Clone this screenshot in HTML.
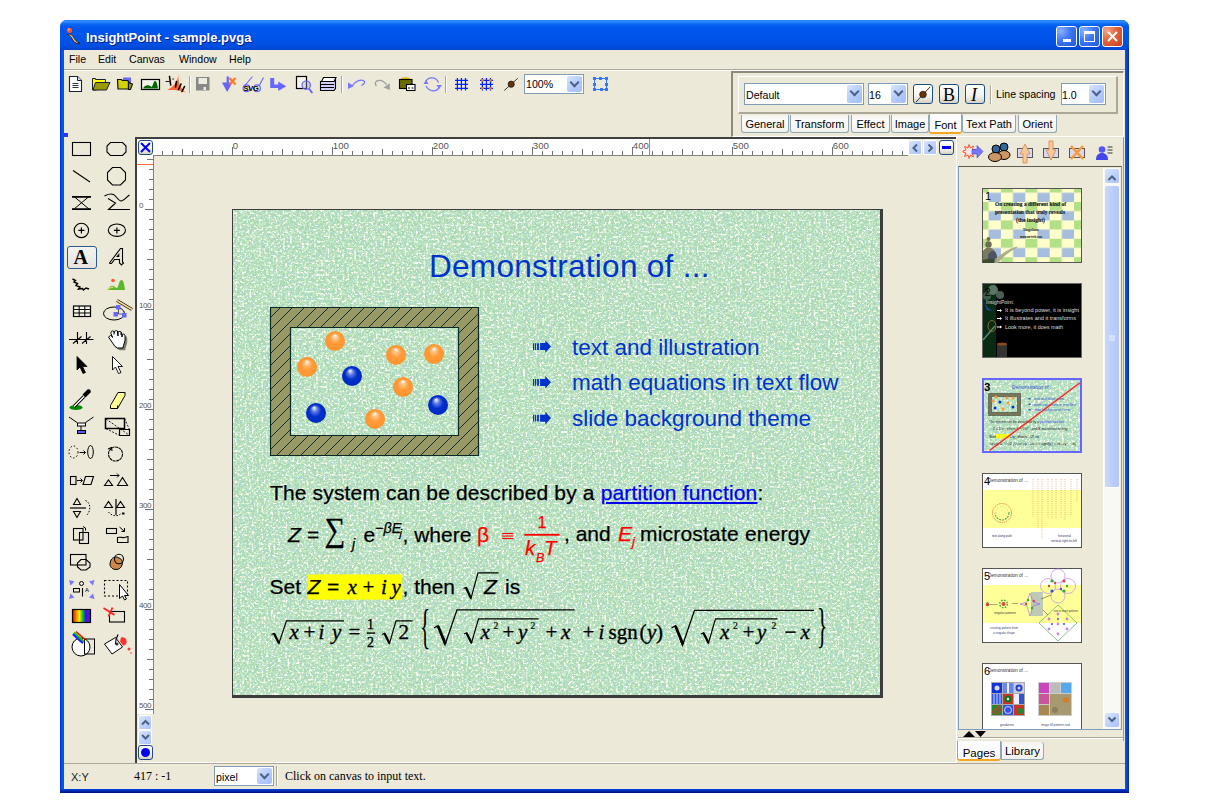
<!DOCTYPE html>
<html><head><meta charset="utf-8">
<style>
*{margin:0;padding:0;box-sizing:border-box}
html,body{width:1210px;height:806px;background:#fff;overflow:hidden;font-family:"Liberation Sans",sans-serif;font-size:11px;color:#000;position:relative}
.a{position:absolute;white-space:nowrap}
#win{left:60px;top:20px;width:1069px;height:773px;background:linear-gradient(90deg,#0019CF 0,#0050E8 1px,#0058EE 3px,#0055E5 4px);border-radius:7px 7px 0 0;overflow:hidden}
#title{left:0;top:0;width:1069px;height:30px;background:linear-gradient(#0A6AF8 0,#3D95FF 1px,#2A85FF 2px,#0A68F5 4px,#0058EE 7px,#0055EA 14px,#0052E6 22px,#004CDD 27px,#0042CC 30px)}
#wr{left:1065px;top:28px;width:4px;height:745px;background:linear-gradient(90deg,#0058EE 0,#0054E6 1px,#0048D6 2px,#0036BA 3px,#0026A0 4px)}
#wb{left:0;top:769px;width:1069px;height:4px;background:linear-gradient(#0846D9 0,#0038C8 1px,#0028B0 2px,#001A90 3px,#001580 4px)}
#client{left:64px;top:50px;width:1061px;height:739px;background:#ECE9D8}
.tb{position:absolute;width:21px;height:21px;top:26px;border:1px solid #fff;border-radius:3px;background:radial-gradient(circle at 20% 20%,#8DB2FF 0,#3D78F5 45%,#1F56DA 100%)}
.combo{position:absolute;background:#fff;border:1px solid #7F9DB9}
.cbtn{position:absolute;top:1px;right:1px;width:15px;bottom:1px;border-radius:2px;background:linear-gradient(135deg,#D7E4FE,#B1C8FB 60%,#A6BEF7)}
.cbtn:after{content:"";position:absolute;left:4px;top:3px;width:5px;height:5px;border-right:2px solid #4D6185;border-bottom:2px solid #4D6185;transform:rotate(45deg)}
.xbtn{position:absolute;border:1px solid #1C4D82;border-radius:3px;background:linear-gradient(#FFFFFF,#F3F2EC 60%,#D6D0C2)}
.tab{position:absolute;height:18px;top:115px;border:1px solid #91A7B4;border-top:none;border-radius:0 0 3px 3px;background:linear-gradient(#F4F3EE,#FCFCFE 40%,#F0EFE8);font-size:11px;text-align:center;line-height:19px}
.rl{position:absolute;font-size:9px;color:#555;font-family:"Liberation Sans",sans-serif;letter-spacing:-0.3px}
.st{position:absolute;font-family:"Liberation Sans",sans-serif}
.bl{color:#0033CC}
.sb{position:absolute;width:14px;height:15px;border-radius:2px;background:linear-gradient(135deg,#D9E5FE,#BBCFFB 60%,#ABC2F8);border:1px solid #fff}
</style></head><body>
<div id="win" class="a">
  <div id="title" class="a"></div>
  <div id="wr" class="a"></div><div id="wb" class="a"></div>
</div>
<div id="client" class="a"></div>

<!-- title text -->
<div class="a" style="left:86px;top:29.5px;font-size:13px;font-weight:bold;color:#fff;text-shadow:1px 1px 0 #0A1E8C">InsightPoint - sample.pvga</div>
<div class="tb" style="left:1056px"><div class="a" style="left:6px;top:12px;width:8px;height:3px;background:#fff"></div></div>
<div class="tb" style="left:1079px"><div class="a" style="left:4px;top:4px;width:11px;height:11px;border:1px solid #fff;border-top-width:3px"></div></div>
<div class="tb" style="left:1102px;background:radial-gradient(circle at 20% 20%,#F3A58A 0,#E2633B 45%,#C9401A 100%)"><svg class="a" style="left:4px;top:4px" width="11" height="11"><path d="M1 1L10 10M10 1L1 10" stroke="#fff" stroke-width="2"/></svg></div>

<!-- menu -->
<div class="a" style="left:69px;top:53px;font-size:10.6px">File</div>
<div class="a" style="left:98px;top:53px;font-size:10.6px">Edit</div>
<div class="a" style="left:129px;top:53px;font-size:10.6px">Canvas</div>
<div class="a" style="left:179px;top:53px;font-size:10.6px">Window</div>
<div class="a" style="left:229px;top:53px;font-size:10.6px">Help</div>
<div class="a" style="left:64px;top:69px;width:1061px;height:1px;background:#ACA899"></div>
<div class="a" style="left:64px;top:70px;width:1061px;height:1px;background:#fff"></div>

<!-- toolbar zoom combo -->
<div class="combo" style="left:524px;top:74px;width:60px;height:20px"><div class="a" style="left:1px;top:3px;font-size:10.6px">100%</div><div class="cbtn"></div></div>
<div class="a" style="left:585px;top:74px;width:1px;height:20px;background:#ECE9D8"></div>

<!-- toolbar icons -->
<svg class="a" style="left:0;top:0;overflow:visible" width="1210" height="806">
<!-- new doc -->
<path d="M69.5 76.5h8l4 4v11h-12z" fill="#fff" stroke="#1A2035" stroke-width="1.1"/>
<path d="M77.5 76.5v4h4" fill="#E8E8F0" stroke="#1A2035" stroke-width="1"/>
<path d="M72.5 83.5h6M72.5 85.5h6M72.5 87.5h6" stroke="#1A2035" stroke-width="0.9"/>
<!-- open folder -->
<path d="M92.5 78.5h3v1h10v3h-9v7.5h-4z" fill="#FFFF00" stroke="#1A2035" stroke-width="1"/>
<path d="M95.5 82.5h14.5l-3.5 7.5h-13.5z" fill="#999900" stroke="#1A2035" stroke-width="1"/>
<!-- folder 2 -->
<path d="M123 77.5h8v8h-8z" fill="#6A6AF0"/>
<path d="M117.5 79.5h4l1 1h5l1 1v7.5h-10.5z" fill="#D4D000" stroke="#111" stroke-width="1.2"/>
<path d="M128.5 82.5l4 1.5-2 5.5-2 0z" fill="#999900" stroke="#111" stroke-width="1.1"/>
<!-- image -->
<rect x="141.5" y="79.5" width="18" height="10" fill="#F4F2E6" stroke="#000" stroke-width="1.2"/>
<path d="M143 88.5c2-4 6-4 8.5-1.5c1.5-1 2-6 3.5-6c2 0 2.5 5 3 7.5z" fill="#006600"/>
<!-- xml -->
<path d="M178.4 74.7c0 6 0.5 10 2.5 12.5c1.5 2 3 3.5 4.6 5.3c-4-1.5-8-2.6-11.5-2.6c-2.5 0-5 0.2-6.6 0c3-2 6.5-4.5 8.5-7.5c1.5-2.5 2.2-5 2.5-7.7z" fill="#FF6633"/>
<g stroke="#000" stroke-linecap="round"><path d="M169.5 76.5l1.2 8.5" stroke-width="1.6"/><path d="M166 81.5h3" stroke-width="0.9"/><path d="M176.5 81.5l-1 5.5M181 84l-2.5 5.5M184.5 86.5l-2.5 5" stroke-width="1.6"/><path d="M173 79l0.2 0.2" stroke-width="1.2"/></g>
<path d="M189.5 76v17" stroke="#ACA899"/><path d="M190.5 76v17" stroke="#fff"/>
<!-- save grey -->
<path d="M196 77h13.5v13.5h-13.5z" fill="#888"/>
<rect x="198.5" y="78" width="8.5" height="6" fill="#EDEBE0"/>
<rect x="203.5" y="87" width="2.5" height="3" fill="#EDEBE0"/>
<!-- import -->
<path d="M226.6 76.5h2.3v6h3.6l-5.3 9.5-5.3-9.5h4.7z" fill="#6666FF"/>
<path d="M229.5 78l6 6.5M235.5 78l-6 6.5" stroke="#FF7722" stroke-width="2.2"/>
<!-- svg -->
<path d="M244.5 86l8-9.5M259 86l4.5-8.5" stroke="#6666FF" stroke-width="1.1" fill="none"/>
<circle cx="246.5" cy="88.3" r="3.4" fill="none" stroke="#6666FF" stroke-width="1.1"/>
<circle cx="257" cy="88.3" r="3.4" fill="none" stroke="#6666FF" stroke-width="1.1"/>
<text x="243.5" y="91" font-family="Liberation Sans" font-size="7.5" font-weight="bold" fill="#000" letter-spacing="-0.3">SVG</text>
<!-- arrow right -->
<path d="M270.2 78h4v6.6h4v-3l8 4.6-8 4.9v-3.2h-8z" fill="#6666FF"/>
<!-- preview -->
<rect x="296.5" y="76.5" width="10" height="12" fill="#F8F6E8" stroke="#000" stroke-width="1.2"/>
<circle cx="306.2" cy="85.2" r="4.2" fill="rgba(160,160,200,0.35)" stroke="#6666FF" stroke-width="1.2"/>
<path d="M308.8 88.5l3.5 4.5" stroke="#6666FF" stroke-width="2"/>
<!-- printer -->
<path d="M323.5 77.5h12.5l-2 4h-12.5z" fill="#fff" stroke="#000" stroke-width="1.1"/>
<path d="M320.5 81.5h13.5l1.5-1.5v8.5l-1.5 2h-13.5z" fill="#D0D0F8" stroke="#000" stroke-width="1.1"/>
<path d="M320.5 84.5h13.5M320.5 87.5h13.5" stroke="#000" stroke-width="1.1"/>
<path d="M341.5 76v17" stroke="#ACA899"/><path d="M342.5 76v17" stroke="#fff"/>
<!-- undo -->
<path d="M352 86c3-5 9-7 12-5c1.5 1 0.5 3-2.5 4.5" fill="none" stroke="#7777FF" stroke-width="1.3"/>
<path d="M348 82.5l6 3.5-6 3z" fill="#7777FF"/>
<!-- redo -->
<path d="M376.5 86c-2-2-1.5-5 2-5.5c3-0.5 6 1.5 8 4" fill="none" stroke="#A0A0A0" stroke-width="1.3"/>
<path d="M383.5 87.5l6.3-4.2v6.6z" fill="#A0A0A0"/>
<!-- bag -->
<path d="M401.5 79.5c0-2 8-2 8 0" fill="none" stroke="#E0B000" stroke-width="1.5"/>
<rect x="399.5" y="79.5" width="12.5" height="9" fill="#6B6B00" stroke="#000" stroke-width="1.1"/>
<rect x="406.5" y="84.5" width="8.5" height="6" fill="#fff" stroke="#000" stroke-width="1.1"/>
<path d="M408 88h2M411.5 88h2" stroke="#000"/>
<!-- refresh -->
<path d="M425.5 82c2-5 10-6 13 0.5" fill="none" stroke="#7777FF" stroke-width="1.3"/>
<path d="M436.5 85l5.5 0-3 4z" fill="#7777FF"/>
<path d="M439 88c-3 4-10 4-13-2" fill="none" stroke="#7777FF" stroke-width="1.3"/>
<path d="M423.5 84l2.5-4 2.5 4z" fill="#7777FF"/>
<path d="M445.5 76v17" stroke="#ACA899"/><path d="M446.5 76v17" stroke="#fff"/>
<!-- grid -->
<path d="M457.4 78v12.5M461.4 78v12.5M465.5 78v12.5M455 80.4h13M455 84.4h13M455 88.3h13" stroke="#0022FF" stroke-width="1.2"/>
<path d="M482.4 78v12.5M486.4 78v12.5M490.5 78v12.5M480 80.4h13M480 84.4h13M480 88.3h13" stroke="#0022FF" stroke-width="1.2"/>
<g fill="#E08000"><circle cx="482.4" cy="80.4" r="1.4"/><circle cx="490.5" cy="80.4" r="1.4"/><circle cx="482.4" cy="88.3" r="1.4"/><circle cx="490.5" cy="88.3" r="1.4"/></g>
<!-- pen -->
<path d="M504.2 90.5L517.8 78.3" stroke="#404040" stroke-width="1"/>
<circle cx="511.2" cy="84.2" r="3.1" fill="#6B3300" stroke="#222" stroke-width="0.8"/>
<!-- selection -->
<path d="M594.5 78.5h12v11h-12z" fill="none" stroke="#3377FF" stroke-width="1"/>
<g fill="#3377FF"><rect x="593" y="77" width="3" height="3"/><rect x="599" y="77" width="3" height="3"/><rect x="605" y="77" width="3" height="3"/><rect x="593" y="83" width="3" height="3"/><rect x="605" y="83" width="3" height="3"/><rect x="593" y="88" width="3" height="3"/><rect x="600" y="88" width="3" height="3"/><rect x="605" y="88" width="3" height="3"/></g>
</svg>

<!-- right property panel -->
<div class="a" style="left:731px;top:71px;width:393px;height:66px;border-left:2px solid #8E8B7E;border-top:2px solid #8E8B7E;border-right:1px solid #fff;border-bottom:1px solid #fff"></div>
<div class="a" style="left:738px;top:76px;width:380px;height:38px;border-left:1px solid #fff;border-top:1px solid #fff;border-right:2px solid #ACA899;border-bottom:2px solid #ACA899"></div>
<div class="combo" style="left:744px;top:83px;width:120px;height:22px"><div class="a" style="left:1px;top:5px;font-size:10.6px">Default</div><div class="cbtn"></div></div>
<div class="combo" style="left:868px;top:83px;width:40px;height:22px"><div class="a" style="left:0px;top:5px;font-size:10.6px">16</div><div class="cbtn"></div></div>
<div class="xbtn" style="left:913px;top:84px;width:20px;height:20px"></div>
<div class="xbtn" style="left:939px;top:84px;width:20px;height:20px"><div class="a" style="left:3px;top:0px;font:18px 'Liberation Serif'">B</div></div>
<div class="xbtn" style="left:965px;top:84px;width:20px;height:20px"><div class="a" style="left:5px;top:0px;font:italic 18px 'Liberation Serif'">I</div></div>
<div class="a" style="left:990px;top:85px;width:1px;height:19px;background:#ACA899"></div>
<div class="a" style="left:991px;top:85px;width:1px;height:19px;background:#fff"></div>
<div class="a" style="left:996px;top:88px;font-size:10.6px">Line spacing</div>
<div class="combo" style="left:1061px;top:83px;width:45px;height:22px"><div class="a" style="left:0px;top:5px;font-size:10.6px">1.0</div><div class="cbtn"></div></div>
<!-- tabs -->
<div class="tab" style="left:741px;width:48px">General</div>
<div class="tab" style="left:790px;width:59px">Transform</div>
<div class="tab" style="left:851px;width:39px">Effect</div>
<div class="tab" style="left:891px;width:38px">Image</div>
<div class="tab" style="left:929px;width:33px;top:114px;height:20px;background:#FCFCFE;line-height:23px;border-bottom:2px solid #F5A623">Font</div>
<div class="tab" style="left:962px;width:54px">Text Path</div>
<div class="tab" style="left:1018px;width:39px">Orient</div>

<!-- tool palette -->
<div class="a" style="left:64px;top:133px;width:4px;height:4px;background:#3333FF"></div>
<div class="xbtn" style="left:67px;top:246px;width:30px;height:23px;border-color:#2B5A8C;background:linear-gradient(#F4F4F0,#E6E4DC)"></div>
<svg class="a" style="left:0;top:0;overflow:visible" width="1210" height="806">
<g fill="none" stroke="#000" stroke-width="1.1">
<rect x="72.5" y="142.5" width="18" height="13"/>
<path d="M110.5 142.5h12l3.5 3.5v6l-3.5 3.5h-12l-3.5-3.5v-6z"/>
<path d="M73 170.5l17 11.5"/>
<path d="M112.5 167.5h8l5 5v7.5l-5 5h-8l-5-5v-7.5z"/>
<path d="M72.5 196.5h18M72.5 209.5h18M74 196.5l15.5 13M89 196.5l-15.5 13" stroke-width="1"/>
<path d="M72 196.8h19M72 209.2h19" stroke-width="1.8"/>
<path d="M104.5 196c3-1.5 5-3 9-1.5c3 1.5 5 7 8 6.5c3-0.5 5-4 8-6M108 198.5l7.5 4.5-7 6.5h21.5" stroke-width="1.1"/>
<circle cx="81.4" cy="230.4" r="7.2"/>
<path d="M78.4 230.4h6M81.4 227.4v6" stroke-width="1.2"/>
<ellipse cx="116.9" cy="230.2" rx="8.6" ry="6.2"/>
<path d="M113.9 230.4h6M116.9 227.4v6" stroke-width="1.2"/>
</g>
<text x="73.5" y="263.5" font-family="Liberation Serif" font-weight="bold" font-size="20" fill="#000">A</text>
<path d="M109.5 263l11-14.5h2v13.5l1 1-2 2-2-2v-3.5h-5l-3 4h-1.5z" fill="none" stroke="#000" stroke-width="1.1"/><path d="M116 257l3.3-3.8v3.8z" fill="#000"/>
<path d="M72.5 279l3 1.5-1.5 1.5 3.5 1.5-1.5 2 4 1.5-1.5 2 4-0.5 1 1.5 2.5-2 3 1" fill="none" stroke="#000" stroke-width="1.4"/>
<circle cx="113" cy="280.5" r="1.8" fill="#FF5533"/>
<path d="M107.5 290c2-4 4-5 6-4c1 0.5 2 2 4 2c1-3 2-8 4-8c2 0 3 5 3.5 10z" fill="#5CB82A"/>
<path d="M107.5 290c2-3 4-3 6-2.5" fill="none" stroke="#C8E050" stroke-width="1.5"/>
<g fill="none" stroke="#000" stroke-width="1.2">
<rect x="73.5" y="306" width="17" height="10.5" fill="#F6F6E8"/>
<path d="M73.5 309.5h17M73.5 313h17M79.2 306v10.5M84.8 306v10.5" stroke-width="1"/>
<ellipse cx="114" cy="313.5" rx="10.5" ry="6.5" stroke-width="1"/>
</g>
<path d="M117 300.5l15 9" stroke="#000" stroke-width="3.2"/><path d="M117 300.5l15 9" stroke="#F8D890" stroke-width="1.8"/>
<path d="M118.5 308.5v5.5h5" stroke="#333" stroke-width="0.8" fill="none"/>
<g fill="#6666FF"><rect x="116" y="305" width="4.5" height="4.5"/><rect x="113.5" y="312" width="4.5" height="4.5"/><rect x="122" y="313" width="4.5" height="4.5"/></g>
<g stroke="#000" stroke-width="1.1" fill="none">
<path d="M69 339.5h24.5M77.5 332v12M73 343.5l8.5-7M86.5 332v12M82 343.5l8.5-7"/>
</g>
<path d="M109.5 338l2-1.5 1.5 0.5 0.5 1.5-1.5-4c-0.5-2 1-3 2.5-2.5l1 1.5c0-1.5 1.5-2.3 3-1.5l0.5 5 0-4c1.5-1 3-0.5 3.5 0.5l0.5 4.5 0.5-2.5c1.5-1 2.5 0 2.5 1.5v4.5l-1.5 5-0.5 2.5h-5.5l-2.5-1.5z" fill="#222" opacity="0.55" transform="translate(1.2 1.2)"/>
<path d="M108.5 337l2-1.5 1.5 0.5 0.5 1.5-1.5-4c-0.5-2 1-3 2.5-2.5l1 1.5c0-1.5 1.5-2.3 3-1.5l0.5 5 0-4c1.5-1 3-0.5 3.5 0.5l0.5 4.5 0.5-2.5c1.5-1 2.5 0 2.5 1.5v4.5l-1.5 5-0.5 2.5h-5.5l-2.5-1.5z" fill="#fff" stroke="#000" stroke-width="1"/>
<path d="M114 331.5v3M117.5 331v3M121 332v3" stroke="#000" stroke-width="1"/>
<path d="M77 356.5v13.5l3-3 3 6.5 2.5-1-3-6h4.5z" fill="#000" stroke="#000" stroke-width="0.8"/>
<path d="M112.5 356.5v13.5l3-3 3 6.5 2.5-1-3-6h4.5z" fill="#fff" stroke="#000" stroke-width="0.9"/>
<!-- eyedropper -->
<ellipse cx="76" cy="407.5" rx="6.5" ry="2.5" fill="#008800"/>
<path d="M74 406.5l10-10" stroke="#000" stroke-width="3.2"/><path d="M74 406.5l10-10" stroke="#fff" stroke-width="1.4"/>
<path d="M82.5 394.5l5-5c2-1 4 1 3 3l-5 5z" fill="#000"/>
<!-- eraser -->
<path d="M110.5 405.5l7.5-13h7l-7.5 13z" fill="#FFFF99" stroke="#000" stroke-width="1"/>
<path d="M110.5 405.5v3h7l7.5-13v-3M117.5 405.5v3" fill="#FFFF99" stroke="#000" stroke-width="1"/>
<!-- Y connector -->
<path d="M69 417l8 5.5M93.5 417l-8 5.5M81 424v6" stroke="#000" stroke-width="1"/>
<rect x="77.5" y="423" width="8" height="3" fill="#fff" stroke="#000" stroke-width="1"/>
<rect x="77.5" y="430.5" width="8" height="3" fill="#5555FF" stroke="#000" stroke-width="1"/>
<!-- perspective box -->
<g fill="none" stroke="#000">
<path d="M105.5 418.5h19v10h-19z" stroke-width="1.5"/>
<path d="M119.5 429.5h10v6h-10z" stroke-width="1.2"/>
<path d="M106 419l23 16M124.5 418.5l5 11M106 428.5l13.5 7" stroke-width="0.9" stroke-dasharray="2 1.5"/>
</g>
<!-- dotted circle -> ellipse -->
<ellipse cx="73.5" cy="452" rx="4.5" ry="6" fill="none" stroke="#000" stroke-width="1" stroke-dasharray="1.5 2"/>
<path d="M79.5 452.5h6M83.5 450.5l2 2-2 2" stroke="#000" stroke-width="1" fill="none"/>
<ellipse cx="90.5" cy="452" rx="2.8" ry="6.5" fill="none" stroke="#000" stroke-width="1"/>
<circle cx="115.5" cy="454" r="7" fill="none" stroke="#000" stroke-width="1.1" stroke-dasharray="3 0.6"/>
<path d="M108 449l3.5-1.5 0.5 3.5" stroke="#000" stroke-width="1.1" fill="none"/>
<!-- rect -> parallelogram -->
<rect x="70.5" y="476.5" width="5.5" height="8" fill="none" stroke="#000" stroke-width="1.1"/>
<path d="M77 480.5h5M80.5 478.5l2 2-2 2" stroke="#000" stroke-width="1" fill="none"/>
<path d="M85.5 476.5h8l-2.5 8h-8z" fill="none" stroke="#000" stroke-width="1.1"/>
<path d="M104.5 485.5l4-5.5 4 5.5zM117.5 485.5l5-8 5 8z" fill="none" stroke="#000" stroke-width="1.1"/>
<path d="M110 475.5h9M117 473.5l2 2-2 2" stroke="#000" stroke-width="1" fill="none"/>
<!-- flip v -->
<path d="M73.5 504.5l3.5-6 3.5 6zM73.5 511.5l3.5 6 3.5-6z" fill="none" stroke="#000" stroke-width="1.1"/>
<path d="M70 508h16" stroke="#000" stroke-width="1.2"/>
<path d="M85.5 500.5c5 2 6 10 1 15" fill="none" stroke="#000" stroke-width="1" stroke-dasharray="1.5 1.5"/>
<path d="M104.5 507.5l4-6 4 6zM116.5 507.5l4-6 4 6z" fill="none" stroke="#000" stroke-width="1.1"/>
<path d="M116 499v16" stroke="#000" stroke-width="1.2"/>
<path d="M108.5 512c3 4 9 5 12 2" fill="none" stroke="#000" stroke-width="1" stroke-dasharray="1.5 1.5"/>
<rect x="122" y="512.5" width="2.5" height="2" fill="#000"/>
<!-- overlap rects -->
<rect x="73.5" y="528.5" width="9.5" height="11.5" fill="none" stroke="#000" stroke-width="1.1"/>
<rect x="79.5" y="532.5" width="9" height="11" fill="none" stroke="#000" stroke-width="1.1"/>
<path d="M83 526.5l2.5 1.5v2.5" fill="none" stroke="#000" stroke-width="1"/>
<rect x="106.5" y="528.5" width="10" height="5" fill="none" stroke="#000" stroke-width="1.1"/>
<path d="M119.5 527l5 4.5M124.5 528v3.5h-3" fill="none" stroke="#000" stroke-width="1"/>
<path d="M117.5 537.5c3-1 5 0.5 7 0c2-0.5 3-1 3.5-1v6h-10.5z" fill="none" stroke="#000" stroke-width="1.1"/>
<!-- rect + octagon -->
<rect x="70.5" y="554.5" width="15.5" height="10.5" fill="none" stroke="#000" stroke-width="1.1"/>
<path d="M81 559.5h5l4 3.5v4l-4 3h-5l-3.5-3v-4z" fill="none" stroke="#000" stroke-width="1.1"/>
<!-- orange blob -->
<path d="M111 560c2-3 5-4 8-2c3 1 4 4 3 7c-1 3-3 4.5-6 4.5c-3 0-6-2-6-5.5c0-1 0.5-3 1-4z" fill="#CC8844" stroke="#000" stroke-width="1"/>
<ellipse cx="119" cy="559" rx="4.5" ry="4.8" fill="none" stroke="#000" stroke-width="1.1"/>
<!-- align -->
<g fill="#7777FF"><path d="M69 580l5.5 1.5-4 4z"/><path d="M94.5 580l-5.5 1.5 4 4z"/><path d="M69 599l5.5-1.5-4-4z"/><path d="M94.5 599l-5.5-1.5 4-4z"/></g>
<rect x="73.5" y="588.5" width="6" height="3.5" fill="none" stroke="#000" stroke-width="1"/>
<circle cx="81.5" cy="583.5" r="2" fill="none" stroke="#000" stroke-width="1"/>
<path d="M82.5 588v8.5" stroke="#000" stroke-width="1.1"/>
<text x="85" y="591.5" font-family="Liberation Sans" font-size="6" fill="#000">A</text>
<!-- dotted select -->
<rect x="104.5" y="580.5" width="23" height="15.5" fill="none" stroke="#000" stroke-width="1.1" stroke-dasharray="2 2"/>
<path d="M119.5 584.5v14l3-2.5 2 4 2-1-2-3.5h4z" fill="#fff" stroke="#000" stroke-width="1"/>
<!-- rainbow -->
<defs><linearGradient id="rb" x1="0" x2="1"><stop offset="0" stop-color="#E00000"/><stop offset="0.2" stop-color="#FF8800"/><stop offset="0.38" stop-color="#FFEE00"/><stop offset="0.55" stop-color="#22CC00"/><stop offset="0.72" stop-color="#2222FF"/><stop offset="1" stop-color="#8800AA"/></linearGradient></defs>
<rect x="72.5" y="609.5" width="18" height="13" fill="url(#rb)" stroke="#000" stroke-width="1.2"/>
<!-- red x rect -->
<rect x="109.5" y="611.5" width="15" height="10.5" fill="none" stroke="#000" stroke-width="1.1"/>
<path d="M103.5 608l11 7M112.5 607.5l-4 9" stroke="#FF2222" stroke-width="1.8"/>
<!-- circle rgb -->
<circle cx="81" cy="647" r="9" fill="#fff" stroke="#000" stroke-width="1"/>
<rect x="84.5" y="639" width="10" height="15" fill="none" stroke="#000" stroke-width="1"/>
<path d="M73 634l10 9" stroke="#2222FF" stroke-width="2.5"/><path d="M74 632.5l10 9" stroke="#00CC00" stroke-width="2"/><path d="M76 631.5l9 8" stroke="#FF0000" stroke-width="1.5"/>
<!-- bucket -->
<path d="M104.5 644l11-6.5 7 9.5-10.5 7z" fill="#fff" stroke="#000" stroke-width="1"/>
<path d="M118 634.5l-2 5-0.5 5" stroke="#000" stroke-width="1.1" fill="none"/><circle cx="117" cy="644" r="1.5" fill="#333"/>
<path d="M121 637.5c4-1.5 6 2 5.5 5s-3 3-3.5 3l-3-4z" fill="#FF3333"/><circle cx="129" cy="649" r="1.5" fill="#FF3333"/><circle cx="131" cy="653" r="0.8" fill="#FF3333"/>
</svg>

<!-- canvas frame -->
<div class="a" style="left:135px;top:137px;width:822px;height:2px;background:#404040"></div>
<div class="a" style="left:135px;top:137px;width:2px;height:626px;background:#404040"></div>
<div class="a" style="left:137px;top:762px;width:820px;height:1px;background:#fff"></div>
<div class="a" style="left:956px;top:137px;width:1px;height:626px;background:#fff"></div>
<!-- h ruler -->
<div class="a" style="left:137px;top:139px;width:771px;height:17px;background:#fff"></div>
<div class="a" style="left:154px;top:155px;width:754px;height:1px;background:#808080"></div>
<!-- v ruler -->
<div class="a" style="left:137px;top:139px;width:17px;height:575px;background:#fff"></div>
<div class="a" style="left:153px;top:155px;width:1px;height:559px;background:#808080"></div>
<div class="a" style="left:137px;top:164px;width:16px;height:1px;background:#F0703A"></div>
<div class="xbtn" style="left:138px;top:140px;width:15px;height:15px"><svg class="a" style="left:1px;top:1px" width="11" height="11"><path d="M1 1L10 10M10 1L1 10" stroke="#0000FF" stroke-width="2"/></svg></div>
<div class="xbtn" style="left:939px;top:140px;width:15px;height:15px"><div class="a" style="left:2px;top:5px;width:9px;height:3px;background:#0000F0"></div></div>
<div class="xbtn" style="left:138px;top:745px;width:15px;height:15px"><div class="a" style="left:2px;top:2px;width:9px;height:9px;border-radius:50%;background:#0000F0"></div></div>
<div class="a" style="left:649px;top:139px;width:1px;height:16px;background:#F0703A"></div>
<div class="sb" style="left:908px;top:140px"></div><div class="sb" style="left:923px;top:140px"></div>
<div class="sb" style="left:138px;top:715px"></div><div class="sb" style="left:138px;top:730px"></div>
<svg class="a" style="left:0;top:0;overflow:visible" width="1210" height="806">
<path d="M917 144.5l-3.5 3.5 3.5 3.5M928.5 144.5l3.5 3.5-3.5 3.5M142 724.5l3.5-3.5 3.5 3.5M142 735l3.5 3.5 3.5-3.5" fill="none" stroke="#4D6185" stroke-width="2"/>
<!-- title icon -->
<circle cx="69.5" cy="30.3" r="2.6" fill="#FF5522"/><circle cx="68.8" cy="29.6" r="1" fill="#FFB090"/>
<path d="M67 34.5c3-1 5 0 6.5 2.5c1.5 3 3 5 6.5 6.3h-3.5c-2.5-1-3.5-3-5-5.5c-1-1.8-2.5-2.8-4.5-3.3z" fill="#D8C890" stroke="#2A1A08" stroke-width="0.8"/>
<!-- color pen button icon -->
<path d="M916 102L930 87" stroke="#333" stroke-width="1"/>
<circle cx="923" cy="94.5" r="3.3" fill="#6B3300" stroke="#222" stroke-width="0.8"/>
</svg>
<div id="rulers"></div>
<svg class="a" style="left:0;top:0;overflow:visible" width="1210" height="806"><g stroke="#707070" stroke-width="1">
<path d="M162.5 151V155M172.5 151V155M182.5 149V155M192.5 151V155M202.5 151V155M212.5 151V155M222.5 151V155M232.5 147V155M242.5 151V155M252.5 151V155M262.5 151V155M272.5 151V155M282.5 149V155M292.5 151V155M302.5 151V155M312.5 151V155M322.5 151V155M332.5 147V155M342.5 151V155M352.5 151V155M362.5 151V155M372.5 151V155M382.5 149V155M392.5 151V155M402.5 151V155M412.5 151V155M422.5 151V155M432.5 147V155M442.5 151V155M452.5 151V155M462.5 151V155M472.5 151V155M482.5 149V155M492.5 151V155M502.5 151V155M512.5 151V155M522.5 151V155M532.5 147V155M542.5 151V155M552.5 151V155M562.5 151V155M572.5 151V155M582.5 149V155M592.5 151V155M602.5 151V155M612.5 151V155M622.5 151V155M632.5 147V155M642.5 151V155M652.5 151V155M662.5 151V155M672.5 151V155M682.5 149V155M692.5 151V155M702.5 151V155M712.5 151V155M722.5 151V155M732.5 147V155M742.5 151V155M752.5 151V155M762.5 151V155M772.5 151V155M782.5 149V155M792.5 151V155M802.5 151V155M812.5 151V155M822.5 151V155M832.5 147V155M842.5 151V155M852.5 151V155M862.5 151V155M872.5 151V155M882.5 149V155M892.5 151V155M902.5 151V155"/>
<path d="M147 159.5H153M149 169.5H153M149 179.5H153M149 189.5H153M149 199.5H153M145 209.5H153M149 219.5H153M149 229.5H153M149 239.5H153M149 249.5H153M147 259.5H153M149 269.5H153M149 279.5H153M149 289.5H153M149 299.5H153M145 309.5H153M149 319.5H153M149 329.5H153M149 339.5H153M149 349.5H153M147 359.5H153M149 369.5H153M149 379.5H153M149 389.5H153M149 399.5H153M145 409.5H153M149 419.5H153M149 429.5H153M149 439.5H153M149 449.5H153M147 459.5H153M149 469.5H153M149 479.5H153M149 489.5H153M149 499.5H153M145 509.5H153M149 519.5H153M149 529.5H153M149 539.5H153M149 549.5H153M147 559.5H153M149 569.5H153M149 579.5H153M149 589.5H153M149 599.5H153M145 609.5H153M149 619.5H153M149 629.5H153M149 639.5H153M149 649.5H153M147 659.5H153M149 669.5H153M149 679.5H153M149 689.5H153M149 699.5H153M145 709.5H153"/>
</g><g font-family="Liberation Sans" font-size="9.6" fill="#555">
<text x="232.8" y="149">0</text>
<text x="332.8" y="149">100</text>
<text x="432.8" y="149">200</text>
<text x="532.8" y="149">300</text>
<text x="632.8" y="149">400</text>
<text x="732.8" y="149">500</text>
<text x="832.8" y="149">600</text>
</g><g font-family="Liberation Sans" font-size="8" fill="#555" letter-spacing="-0.4">
<text x="139" y="207.7">0</text>
<text x="139" y="307.7">100</text>
<text x="139" y="407.7">200</text>
<text x="139" y="507.7">300</text>
<text x="139" y="607.7">400</text>
<text x="139" y="707.7">500</text>
</g></svg>

<!-- slide -->
<div class="a" style="left:232px;top:209px;width:651px;height:489px;background:#3C3C3C"></div>
<svg class="a" style="left:233px;top:210px" width="647" height="485">
<defs>
<filter id="nz" x="0" y="0" width="100%" height="100%">
<feTurbulence type="fractalNoise" baseFrequency="0.42" numOctaves="3" seed="11" result="t"/>
<feColorMatrix in="t" type="matrix" values="0 0 0 0 0.44  0 0 0 0 0.72  0 0 0 0 0.66  0 6 0 0 -2.9" result="d"/>
<feColorMatrix in="t" type="matrix" values="0 0 0 0 0.58  0 0 0 0 0.83  0 0 0 0 0.52  0 0 6 0 -2.9" result="g"/>
<feColorMatrix in="t" type="matrix" values="0 0 0 0 0.96  0 0 0 0 0.97  0 0 0 0 0.90  6 0 0 0 -3.3" result="w"/>
<feMerge><feMergeNode in="d"/><feMergeNode in="g"/><feMergeNode in="w"/></feMerge>
</filter>
</defs>
<rect width="647" height="485" fill="#ABD7B4"/>
<rect width="647" height="485" filter="url(#nz)"/>
</svg>

<!-- slide content -->
<svg class="a" style="left:0;top:0;overflow:visible" width="1210" height="806">
<defs>
<pattern id="hatch" patternUnits="userSpaceOnUse" width="12" height="12" x="0" y="0">
<rect width="12" height="12" fill="#999966"/>
<path d="M-3 3L3 -3M0 12L12 0M9 15L15 9" stroke="#0F2E2E" stroke-width="1"/>
</pattern>
<radialGradient id="og" cx="0.5" cy="0.5" r="0.5" fx="0.5" fy="0.22">
<stop offset="0" stop-color="#FFFFFF"/><stop offset="0.25" stop-color="#FFC080"/><stop offset="0.55" stop-color="#FF9A38"/><stop offset="1" stop-color="#FF952E"/>
</radialGradient>
<radialGradient id="bg2" cx="0.5" cy="0.5" r="0.5" fx="0.4" fy="0.22">
<stop offset="0" stop-color="#FFFFFF"/><stop offset="0.3" stop-color="#5A78E0"/><stop offset="0.6" stop-color="#0030CC"/><stop offset="1" stop-color="#0028C0"/>
</radialGradient>
</defs>
<path d="M270.5 307.5H478.5V455.5H270.5ZM290.5 327.5V435.5H458.5V327.5Z" fill="url(#hatch)" fill-rule="evenodd" stroke="#0A2A2A" stroke-width="1.2"/>
<circle cx="335" cy="341" r="10" fill="url(#og)"/>
<circle cx="307" cy="367" r="10" fill="url(#og)"/>
<circle cx="396" cy="355" r="10" fill="url(#og)"/>
<circle cx="434" cy="354" r="10" fill="url(#og)"/>
<circle cx="403" cy="387" r="10" fill="url(#og)"/>
<circle cx="375" cy="419" r="10" fill="url(#og)"/>
<circle cx="352" cy="376" r="10" fill="url(#bg2)"/>
<circle cx="316" cy="413" r="10" fill="url(#bg2)"/>
<circle cx="438" cy="405" r="10" fill="url(#bg2)"/>
<g fill="#0033CC">
<path id="arr" d="M533 343.2h1.2v6.8h-1.2zM535 343.2h1.2v6.8h-1.2zM537.1 343.2h1.8v6.8h-1.8zM540.1 343.1h5.2v-2.9l5.7 6.3l-5.7 6.3v-2.7h-5.2z"/>
<use href="#arr" y="35.8"/><use href="#arr" y="71.6"/>
</g>
</svg>
<div class="a" style="left:429px;top:248px;font-size:31.5px;color:#0033CC;letter-spacing:0.3px">Demonstration of ...</div>
<div class="a" style="left:572px;top:334.5px;font-size:22.5px;color:#0033CC">text and illustration</div>
<div class="a" style="left:572px;top:370px;font-size:22.5px;color:#0033CC">math equations in text flow</div>
<div class="a" style="left:572px;top:406px;font-size:22.5px;color:#0033CC">slide background theme</div>
<div class="a" style="left:270px;top:481px;font-size:21px;letter-spacing:0.15px;-webkit-text-stroke:0.25px #000">The system can be described by a <span style="color:#0000EE;text-decoration:underline;-webkit-text-stroke:0.25px #0000EE">partition function</span>:</div>

<!-- math -->
<svg class="a" style="left:0;top:0;overflow:visible" width="1210" height="806">
<rect x="307.8" y="574.4" width="94.4" height="25.2" fill="#FFFF00"/>
<g font-family="Liberation Sans" font-size="21" fill="#000" stroke="#000" stroke-width="0.25">
<text x="288" y="542" font-style="italic">Z</text>
<text x="307" y="542">=</text>
<text transform="translate(324.7 540.8) scale(0.97 1.12)" x="0" y="0" font-family="Liberation Serif" font-size="30">&#8721;</text>
<text x="352" y="549" font-style="italic" font-size="14">j</text>
<text x="363.5" y="542">e</text>
<text x="375" y="533" font-style="italic" font-size="14.5">&#8722;&#946;E</text>
<text x="399.5" y="537" font-style="italic" font-size="11">j</text>
<text x="402.5" y="542">, where</text>
<g fill="#FF0000" stroke="#FF0000">
<text x="477" y="542">&#946;</text>
<g stroke-width="0"><rect x="502.2" y="533" width="11.1" height="1.1"/><rect x="502.2" y="535.5" width="11.1" height="1.1"/><rect x="502.2" y="538" width="11.1" height="1.1"/></g>
<text x="537.5" y="528" font-size="16">1</text>
<rect x="524.5" y="534" width="35" height="1.6"/>
<text x="525" y="555.4" font-style="italic" font-size="20.5">k</text>
<text x="536" y="562" font-style="italic" font-size="12.5">B</text>
<text x="544" y="555.4" font-style="italic" font-size="20.5">T</text>
<text x="618" y="541" font-style="italic">E</text>
<text x="632" y="546" font-style="italic" font-size="13">j</text>
</g>
<text x="564" y="541">, and</text>
<text x="640" y="541" letter-spacing="0.2">microstate energy</text>
<text x="269.5" y="593.5">Set</text>
<text x="307.5" y="593.5" font-style="italic">Z</text>
<text x="327" y="593.5">=</text>
<text x="402.5" y="593.5">, then</text>
<text x="484" y="593.5" font-style="italic">Z</text>
<text x="505" y="593.5">is</text>
</g>
<g font-family="Liberation Serif" font-size="21" fill="#000" stroke="#000" stroke-width="0.35">
<text x="347.5" y="593.5" font-style="italic">x</text>
<text x="362.5" y="593.5">+</text>
<text x="381" y="593.5" font-style="italic">i</text>
<text x="391.5" y="593.5" font-style="italic">y</text>
<!-- line 4 -->
<text x="289.5" y="639" font-style="italic">x</text>
<text x="303.5" y="639">+</text>
<text x="318.5" y="639" font-style="italic">i</text>
<text x="332" y="639" font-style="italic">y</text>
<text x="348.5" y="639">=</text>
<text x="367" y="629" font-size="14">1</text>
<rect x="367" y="632.6" width="8" height="1.1"/>
<text x="367" y="647" font-size="14">2</text>
<text x="398.5" y="639">2</text>
<text x="420" y="642.6" font-size="47.6" stroke-width="0" transform="translate(420 0) scale(0.45 1) translate(-420 0)">{</text>
<text x="480.5" y="639" font-style="italic">x</text>
<text x="493.5" y="629" font-size="9.5" stroke-width="0.2">2</text>
<text x="502.5" y="639">+</text>
<text x="518" y="639" font-style="italic">y</text>
<text x="530.5" y="629" font-size="9.5" stroke-width="0.2">2</text>
<text x="545.5" y="639">+</text>
<text x="561" y="639" font-style="italic">x</text>
<text x="582.5" y="639">+</text>
<text x="598.5" y="639" font-style="italic">i</text>
<text x="608.5" y="639">sgn</text>
<text x="639.5" y="639">(</text>
<text x="647" y="639" font-style="italic">y</text>
<text x="656" y="639">)</text>
<text x="720" y="639" font-style="italic">x</text>
<text x="733" y="629" font-size="9.5" stroke-width="0.2">2</text>
<text x="742.5" y="639">+</text>
<text x="757" y="639" font-style="italic">y</text>
<text x="771.5" y="629" font-size="9.5" stroke-width="0.2">2</text>
<text x="784.5" y="639">&#8722;</text>
<text x="800.5" y="639" font-style="italic">x</text>
<text x="817" y="642" font-size="47.6" stroke-width="0" transform="translate(817 0) scale(0.45 1) translate(-817 0)">}</text>
</g>
<g fill="none" stroke="#000" stroke-linejoin="miter">
<!-- sqrt Z line3 -->
<path d="M463.5 588.5l2.5-1.2 5 11 7-25.5h20.5" stroke-width="1.2"/>
<!-- line4 sqrt(x+iy) -->
<path d="M271.5 634.5l2.5-1.2 5 10 7.5-22.5h57.5" stroke-width="1.2"/>
<!-- sqrt2 -->
<path d="M382 634.5l2.5-1.2 5 10 6.5-22.5h16.5" stroke-width="1.2"/>
<!-- big sqrt 1 -->
<path d="M434 628l4-2.2 7 19 12-35h117.5" stroke-width="1.3"/>
<path d="M438 626l7.5 18" stroke-width="2.8"/>
<path d="M464 634l2.5-1.2 5 10 7-24h60" stroke-width="1.2"/>
<!-- big sqrt 2 -->
<path d="M671.5 628l4-2.2 7 19.5 12-35h119.5" stroke-width="1.3"/>
<path d="M675.5 626l7.5 18.5" stroke-width="2.8"/>
<path d="M701 634l2.5-1.2 5 10 7-24h62" stroke-width="1.2"/>
</g>
<g stroke="#000" stroke-width="2.2">
<path d="M274 633.5l5 10"/><path d="M384.5 633.5l5 10"/><path d="M466.5 633l5 10"/><path d="M703.5 633l5 10"/><path d="M466 587.5l5 11"/>
</g>
</svg>

<!-- right slide panel -->
<div class="a" style="left:1123px;top:137px;width:1px;height:604px;background:#9D9A8C"></div>
<div class="a" style="left:958px;top:166px;width:164px;height:564px;border:1px solid #7F9DB9;border-top:1px solid #5E5C50"></div>
<div class="a" style="left:1103px;top:168px;width:17px;height:561px;background:#F8F8F4;border-left:1px solid #fff"></div>
<div class="a" style="left:1105px;top:169px;width:14px;height:14px;border-radius:2px;background:linear-gradient(135deg,#D9E5FE,#BBCFFB 60%,#ABC2F8)"></div>
<div class="a" style="left:1105px;top:186px;width:14px;height:302px;border-radius:2px;background:linear-gradient(90deg,#C9D8FC,#BCCEFA 50%,#B4C8F8);border:1px solid #fff;border-width:0 0 1px 0"></div>
<div class="a" style="left:1105px;top:713px;width:14px;height:14px;border-radius:2px;background:linear-gradient(135deg,#D9E5FE,#BBCFFB 60%,#ABC2F8)"></div>
<svg class="a" style="left:0;top:0;overflow:visible" width="1210" height="806">
<path d="M1108.5 180l3.5-3.5 3.5 3.5M1108.5 717.5l3.5 3.5 3.5-3.5" fill="none" stroke="#4D6185" stroke-width="2"/>
<path d="M1109 336h6M1109 338h6M1109 340h6" stroke="#EEF3FE" stroke-width="1"/>
<!-- splitter arrows -->
<path d="M963 737l6-6 6 6zM975 731h11l-5.5 6z" fill="#000"/>
<path d="M958 737.5h165" stroke="#ACA899"/><path d="M958 738.5h165" stroke="#fff"/>
<!-- panel icons -->
<path d="M963 151l3-1-1.5-3.5 3.5 1.5 1-3.5 1.5 3.5 3-2-1 3.5h3v4h-3l1 3.5-3-2-1.5 3.5-1-3.5-3.5 1.5 1.5-3.5-3-1z" fill="#FFE6E6" stroke="#FF5533" stroke-width="1"/>
<path d="M972 149.5h5v-4l6 6-6 6.5v-4h-5z" fill="#7777FF" stroke="#3333CC" stroke-width="0.5"/>
<ellipse cx="996" cy="149" rx="4" ry="4" fill="#336699" stroke="#000" stroke-width="1"/>
<ellipse cx="1004" cy="147" rx="4" ry="4" fill="#336699" stroke="#000" stroke-width="1"/>
<ellipse cx="1004" cy="155" rx="6" ry="4.5" fill="#CC9966" stroke="#000" stroke-width="1"/>
<ellipse cx="995" cy="157" rx="6.5" ry="4.5" fill="#CC9966" stroke="#000" stroke-width="1"/>
<rect x="1017.5" y="148.5" width="15" height="9" fill="#D8D8F0" stroke="#555" stroke-width="1"/>
<path d="M1023 163v-9h-3l5-10 5 10h-3v9z" fill="#F8C89A" stroke="#D08850" stroke-width="0.8"/>
<rect x="1043.5" y="148.5" width="15" height="9" fill="#D8D8F0" stroke="#555" stroke-width="1"/>
<path d="M1049 141v9h-3l5 10 5-10h-3v-9z" fill="#F8C89A" stroke="#D08850" stroke-width="0.8"/>
<rect x="1069.5" y="148.5" width="15" height="9" fill="#D8D8F0" stroke="#555" stroke-width="1"/>
<path d="M1071 146l12 13M1083 146l-12 13" stroke="#FF9933" stroke-width="2.5"/>
<circle cx="1102" cy="149.5" r="3.3" fill="#5555FF"/>
<path d="M1096 160c0-5 2.5-7 6-7s6 2 6 7z" fill="#4444EE"/>
<path d="M1107.5 147h5M1107.5 150h5M1107.5 153h5" stroke="#333" stroke-width="1"/>
</svg>
<div class="tab" style="left:957px;top:741px;width:44px;height:20px;background:#FCFCFE;border-bottom:2px solid #F5A623;line-height:24px;font-size:11.5px">Pages</div>
<div class="tab" style="left:1001px;top:742px;width:43px;height:18px;border-bottom:1px solid #91A7B4;border-radius:0 3px 3px 0;font-size:11.5px;line-height:19px">Library</div>
<div id="thumbs"></div>
<svg class="a" style="left:0;top:0;overflow:visible" width="1210" height="806">
<defs>
<pattern id="ging" patternUnits="userSpaceOnUse" width="24.4" height="18.4" patternTransform="translate(976.5 183.6)">
<rect width="12.2" height="9.2" fill="#B3DF86"/><rect x="12.2" width="12.2" height="9.2" fill="#FFFFCC"/>
<rect y="9.2" width="12.2" height="9.2" fill="#FFFFCC"/><rect x="12.2" y="9.2" width="12.2" height="9.2" fill="#A6BEDE"/>
</pattern>
<pattern id="tn3" patternUnits="userSpaceOnUse" width="4" height="4"><rect width="4" height="4" fill="#BFE0C2"/><rect x="1" y="1" width="1" height="1" fill="#E8F4E6"/><rect x="3" y="2" width="1" height="1" fill="#9CCDB0"/></pattern>
<clipPath id="lc"><rect x="959" y="167" width="144" height="562"/></clipPath>
</defs>
<g clip-path="url(#lc)">
<!-- thumb 1 -->
<rect x="982.5" y="188.5" width="99" height="74" fill="url(#ging)" stroke="#555" stroke-width="1"/>
<g font-family="Liberation Serif" font-weight="bold" fill="#1A1A1A" font-size="6.5" stroke="#1A1A1A" stroke-width="0.15">
<text x="995" y="206" textLength="71" lengthAdjust="spacingAndGlyphs">On creating a different kind of</text>
<text x="995" y="214" textLength="70" lengthAdjust="spacingAndGlyphs">presentation that truly reveals</text>
<text x="1016" y="222" textLength="29" lengthAdjust="spacingAndGlyphs">(the insight)</text>
<text x="1023" y="231" font-size="3.5" font-weight="normal" fill="#555">Tangolinus</text>
<text x="1020" y="237.5" font-size="3" font-weight="normal" fill="#666">www.nx-tech.com</text>
</g>
<circle cx="988.5" cy="239" r="2" fill="#6E6E52"/>
<circle cx="988.5" cy="244.5" r="3.2" fill="#6E6E52"/>
<path d="M983 263v-12c1.5-2 3-3.5 5.5-3.5s5 1.5 6.5 4c1 2 1.5 5 1.5 11.5z" fill="#7A7A5C"/>
<path d="M988 263v-8c1-3 3-4 5-4s3.5 2 4 5v7z" fill="#4C5566"/>
<path d="M995 259c4-3 9-7 14-9.5c3-1.5 6-2.5 8.5-3c0.5 0.5-0.5 1.5-2 2c-4 2-9 5.5-13 9.5c-1.5 1.5-3 3-4 5h-4z" fill="#A5A585" opacity="0.9"/>
<path d="M983 263v-3c3-1 7-1.5 11-1v4z" fill="#3E4A30"/>
<text x="985" y="200" font-family="Liberation Sans" font-size="11" fill="#000">1</text>
<!-- thumb 2 -->
<rect x="982.5" y="283.5" width="99" height="74" fill="#000" stroke="#666" stroke-width="1"/>
<rect x="983" y="284" width="13" height="73" fill="#0A2A14"/>
<circle cx="993" cy="290" r="5" fill="#6E8A78" opacity="0.8"/><circle cx="1000" cy="295" r="4" fill="#5A6E62" opacity="0.85"/><circle cx="987" cy="296" r="4" fill="#3E5A48"/>
<path d="M984 302l4 6 5 3-6-1z" fill="#1A4A9A"/>
<path d="M983 340l12-14" stroke="#5A8A6A" stroke-width="1.5"/>
<ellipse cx="992" cy="326" rx="4" ry="5.5" fill="none" stroke="#8A6A2A" stroke-width="1"/>
<rect x="997" y="344" width="10" height="13" fill="#333"/><ellipse cx="1002" cy="344" rx="5" ry="1.5" fill="#8A4A10"/>
<g font-family="Liberation Sans" fill="#DDD" font-size="5">
<text x="986" y="304" textLength="28" lengthAdjust="spacingAndGlyphs">InsightPoint:</text>
<text x="1005" y="312" textLength="74" lengthAdjust="spacingAndGlyphs">It is beyond power, it is insight</text>
<text x="1005" y="320" textLength="71" lengthAdjust="spacingAndGlyphs">It illustrates and it transforms</text>
<text x="1005" y="328.5" textLength="58" lengthAdjust="spacingAndGlyphs">Look more, it does math</text>
</g>
<g fill="#fff"><path d="M997 310h3v-1l2 1.5-2 1.5v-1h-3z"/><path d="M997 318h3v-1l2 1.5-2 1.5v-1h-3z"/><path d="M997 326.5h3v-1l2 1.5-2 1.5v-1h-3z"/></g>
<text x="984.5" y="296" font-family="Liberation Sans" font-size="11" fill="#000">2</text>
<!-- thumb 3 -->
<rect x="983" y="379" width="98" height="73" fill="#ABD7B4"/><rect x="983" y="379" width="98" height="73" filter="url(#nz)"/><rect x="983" y="379" width="98" height="73" fill="none" stroke="#6666FF" stroke-width="2"/>
<text x="1012" y="389" font-family="Liberation Sans" font-size="5.2" fill="#3355CC" textLength="42" lengthAdjust="spacingAndGlyphs">Demonstration of ...</text>
<path d="M988.5 393.5h32v22h-32zM991.5 396.5v16h26v-16z" fill="#777755" fill-rule="evenodd" stroke="#333" stroke-width="0.5"/>
<g fill="#FF9933"><circle cx="996" cy="397" r="1.5"/><circle cx="993" cy="401" r="1.5"/><circle cx="1007" cy="398" r="1.5"/><circle cx="1013" cy="398" r="1.5"/><circle cx="1008" cy="403" r="1.5"/><circle cx="1003" cy="409" r="1.5"/></g>
<g fill="#0033CC"><circle cx="1000" cy="402" r="1.5"/><circle cx="995" cy="408" r="1.5"/><circle cx="1013" cy="407" r="1.5"/></g>
<g fill="#3355CC" font-family="Liberation Sans" font-size="3.5"><text x="1034" y="400" textLength="30" lengthAdjust="spacingAndGlyphs">text and illustration</text><text x="1034" y="405.5" textLength="42" lengthAdjust="spacingAndGlyphs">math equations in text flow</text><text x="1034" y="411" textLength="37" lengthAdjust="spacingAndGlyphs">slide background theme</text></g>
<g fill="#3355CC"><rect x="1028.5" y="398" width="2" height="1.5"/><rect x="1028.5" y="403.5" width="2" height="1.5"/><rect x="1028.5" y="409" width="2" height="1.5"/></g>
<g font-family="Liberation Sans" font-size="3.3" fill="#222">
<text x="989" y="423" textLength="50" lengthAdjust="spacingAndGlyphs">The system can be described by a</text>
<text x="1040" y="423" fill="#3333EE" textLength="24" lengthAdjust="spacingAndGlyphs">partition function</text>
<text x="993" y="430" textLength="75" lengthAdjust="spacingAndGlyphs">Z = Σ e , where β ≡ 1/kT , and E microstate energy</text>
<text x="989" y="437.5" textLength="50" lengthAdjust="spacingAndGlyphs">Set Z = x+iy, then √Z is</text>
<text x="989" y="444.5" textLength="87" lengthAdjust="spacingAndGlyphs">√x+iy = ½√2 {√√x²+y² +x  + i sgn(y) √√x²+y² − x}</text>
</g>
<rect x="996" y="434" width="14" height="4.5" fill="#FFFF00" opacity="0.85"/>
<path d="M989.5 450.5L1080 382.8" stroke="#FF2020" stroke-width="1.3"/>
<text x="984" y="390.5" font-family="Liberation Sans" font-weight="bold" font-size="11.5" fill="#000">3</text>
<!-- thumb 4 -->
<rect x="982.5" y="473.5" width="99" height="74" fill="#fff" stroke="#555" stroke-width="1"/>
<rect x="983" y="490" width="98" height="38" fill="#FFFF99"/>
<text x="988" y="482" font-family="Liberation Sans" font-size="5" fill="#333" textLength="40" lengthAdjust="spacingAndGlyphs">Demonstration of ...</text>
<circle cx="1002" cy="513" r="9.5" fill="none" stroke="#E88850" stroke-width="1" stroke-dasharray="1.5 0.8"/>
<circle cx="1002" cy="513" r="7" fill="none" stroke="#55AA55" stroke-width="1.2" stroke-dasharray="2 1"/>
<circle cx="1002" cy="513" r="7.2" fill="none" stroke="#FFFF99" stroke-width="1.5" stroke-dasharray="0 22 22 0"/>
<g stroke="#E8A070" stroke-width="0.8" stroke-dasharray="1 1.2">
<path d="M1033 479v38M1038 479v49M1042 479v60M1048 479v40M1052 479v40M1056 479v40M1061 479v39M1065 479v42M1071 479v36M1077 479v24"/>
</g>
<text x="992" y="537" font-family="Liberation Sans" font-size="3.5" fill="#335" textLength="20" lengthAdjust="spacingAndGlyphs">text along path</text>
<text x="1058" y="537" font-family="Liberation Sans" font-size="3.5" fill="#335" textLength="13" lengthAdjust="spacingAndGlyphs">horizontal</text>
<text x="1051" y="541.5" font-family="Liberation Sans" font-size="3.5" fill="#335" textLength="26" lengthAdjust="spacingAndGlyphs">vertical right-to-left</text>
<text x="984" y="485" font-family="Liberation Sans" font-size="11" fill="#000">4</text>
<!-- thumb 5 -->
<rect x="982.5" y="568.5" width="99" height="74" fill="#fff" stroke="#555" stroke-width="1"/>
<rect x="983" y="585" width="98" height="38" fill="#FFFF99"/>
<text x="988" y="577" font-family="Liberation Sans" font-size="5" fill="#333" textLength="40" lengthAdjust="spacingAndGlyphs">Demonstration of ...</text>
<rect x="1031" y="592" width="12" height="24" fill="#BFC9B8"/>
<circle cx="987.5" cy="604.5" r="1.8" fill="#DD4444"/><circle cx="987.5" cy="603" r="1" fill="#33AA33"/>
<circle cx="1003.5" cy="604" r="3.8" fill="none" stroke="#33AA33" stroke-width="1.5" stroke-dasharray="1.5 1.5"/>
<circle cx="1003.5" cy="604" r="2" fill="#DD4444"/>
<path d="M989.5 604.5h8M1012 603.5h6" stroke="#555" stroke-width="0.5"/>
<path d="M1030 593l3 9l7 2l-7 2l-3 10l-3-10l-7-2l7-2z" fill="none" stroke="#8866EE" stroke-width="0.6"/>
<g fill="#33AA33"><circle cx="1028" cy="600" r="1.2"/><circle cx="1032" cy="608" r="1.2"/></g><g fill="#DD4444"><circle cx="1026" cy="604" r="1.2"/><circle cx="1034" cy="601" r="1.2"/></g>
<g fill="none" stroke="#BB88EE" stroke-width="0.7"><circle cx="1058" cy="576" r="7"/><circle cx="1048" cy="586" r="7.5"/><circle cx="1068" cy="586" r="7.5"/><circle cx="1058" cy="596" r="7"/></g>
<g><circle cx="1052" cy="581" r="1.6" fill="#33AA33"/><circle cx="1064" cy="581" r="1.6" fill="#DD4444"/><circle cx="1052" cy="591" r="1.6" fill="#3355DD"/><circle cx="1064" cy="591" r="1.6" fill="#33AA33"/><circle cx="1055" cy="583" r="1.2" fill="#DD4444"/><circle cx="1061" cy="589" r="1.2" fill="#3355DD"/><circle cx="1049" cy="586" r="1.2" fill="#DD4444"/><circle cx="1067" cy="586" r="1.2" fill="#33AA33"/></g>
<path d="M1058 605l19 18-19 18-19-18z" fill="none" stroke="#55AA55" stroke-width="0.7"/>
<g fill="#CC66DD" opacity="0.85"><circle cx="1049" cy="619" r="1.4"/><circle cx="1058" cy="614" r="1.4"/><circle cx="1067" cy="619" r="1.4"/><circle cx="1049" cy="629" r="1.4"/><circle cx="1058" cy="624" r="1.4"/><circle cx="1067" cy="629" r="1.4"/><circle cx="1058" cy="634" r="1.4"/></g>
<g fill="#3355DD"><circle cx="1058" cy="619" r="1"/><circle cx="1052" cy="624" r="1"/><circle cx="1064" cy="624" r="1"/></g>
<path d="M1041 599l10-4M1043 610l5 5" stroke="#333" stroke-width="0.5"/>
<g font-family="Liberation Sans" font-size="3.3" fill="#333"><text x="994" y="614" textLength="22" lengthAdjust="spacingAndGlyphs">singular patterns</text><text x="1054" y="612" textLength="24" lengthAdjust="spacingAndGlyphs">one or more patterns</text><text x="990" y="629" fill="#446" textLength="28" lengthAdjust="spacingAndGlyphs">creating pattern from</text><text x="993" y="634" fill="#446" textLength="22" lengthAdjust="spacingAndGlyphs">a singular shape</text></g>
<text x="984" y="580" font-family="Liberation Sans" font-size="11" fill="#000">5</text>
<!-- thumb 6 -->
<rect x="982.5" y="663.5" width="99" height="74" fill="#fff" stroke="#555" stroke-width="1"/>
<text x="988" y="672" font-family="Liberation Sans" font-size="5" fill="#333" textLength="40" lengthAdjust="spacingAndGlyphs">Demonstration of ...</text>
<rect x="991" y="682" width="34" height="34" fill="#AAA"/>
<g>
<rect x="992" y="683" width="10" height="10" fill="#1133DD"/><circle cx="997" cy="688" r="2.5" fill="#DDE" />
<rect x="1003" y="683" width="10" height="10" fill="#6688EE"/><rect x="1007" y="683" width="2" height="10" fill="#EEF"/>
<rect x="1014" y="683" width="10" height="10" fill="#CCD"/><circle cx="1019" cy="688" r="3.5" fill="#2244CC"/><circle cx="1019" cy="688" r="1.5" fill="#CCD"/>
<rect x="992" y="694" width="10" height="10" fill="#3355DD"/><path d="M994 694v10M997 694v10M1000 694v10" stroke="#EEF" stroke-width="0.8"/>
<rect x="1003" y="694" width="10" height="10" fill="#CC3322"/><circle cx="1008" cy="699" r="3.5" fill="#117722"/><circle cx="1008" cy="699" r="1.2" fill="#EEE"/>
<rect x="1014" y="694" width="10" height="10" fill="#EEF"/><rect x="1019" y="694" width="5" height="10" fill="#3355CC"/>
<rect x="992" y="705" width="10" height="10" fill="#228833"/><path d="M992 713l8-8M995 715l7-7" stroke="#DD3322" stroke-width="1.5"/>
<rect x="1003" y="705" width="10" height="10" fill="#3355DD"/><circle cx="1008" cy="710" r="3.5" fill="none" stroke="#EEF" stroke-width="0.8"/>
<rect x="1014" y="705" width="10" height="10" fill="#CC3322"/><circle cx="1020" cy="711" r="3" fill="#228833"/>
</g>
<rect x="1038" y="682" width="34" height="34" fill="#CCC"/>
<rect x="1039" y="683" width="10" height="10" fill="#CC44BB"/><rect x="1050" y="683" width="10" height="10" fill="#BBBBBB"/><rect x="1061" y="683" width="10" height="10" fill="#55AAEE"/>
<rect x="1039" y="694" width="10" height="10" fill="#CC5599"/><rect x="1050" y="694" width="21" height="21" fill="#A89A70"/><rect x="1039" y="705" width="10" height="10" fill="#A88850"/>
<circle cx="1066" cy="700" r="3" fill="#DD7722" opacity="0.8"/><circle cx="1055" cy="710" r="3" fill="#8A8060"/>
<text x="1000" y="726" font-family="Liberation Sans" font-size="3.3" fill="#446" textLength="14" lengthAdjust="spacingAndGlyphs">gradients</text>
<text x="1041" y="726" font-family="Liberation Sans" font-size="3.3" fill="#446" textLength="29" lengthAdjust="spacingAndGlyphs">image fill patterns and</text>
<text x="984" y="675" font-family="Liberation Sans" font-size="11" fill="#000">6</text>
</g>
</svg>


<!-- status bar -->
<div class="a" style="left:64px;top:763px;width:1061px;height:1px;background:#ACA899"></div>
<div class="st" style="left:71px;top:771px;font-size:11px;color:#222">X:Y</div>
<div class="a" style="left:134px;top:769px;font:12px 'Liberation Serif'">417 : -1</div>
<div class="combo" style="left:214px;top:766px;width:60px;height:20px"><div class="a" style="left:1px;top:4px;font-size:10.6px">pixel</div><div class="cbtn"></div></div>
<div class="a" style="left:276px;top:766px;width:1px;height:20px;background:#ACA899"></div>
<div class="a" style="left:277px;top:766px;width:1px;height:20px;background:#fff"></div>
<div class="a" style="left:285px;top:769px;font:12px 'Liberation Serif'">Click on canvas to input text.</div>
</body></html>
